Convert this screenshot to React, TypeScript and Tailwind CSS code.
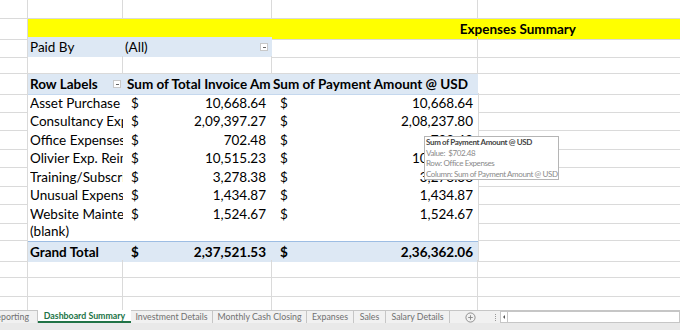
import React from 'react';

const rows = [
  { label: "Asset Purchase", inv: "10,668.64", pay: "10,668.64" },
  { label: "Consultancy Expenses", inv: "2,09,397.27", pay: "2,08,237.80" },
  { label: "Office Expenses", inv: "702.48", pay: "702.48" },
  { label: "Olivier Exp. Reimbursement", inv: "10,515.23", pay: "10,515.23" },
  { label: "Training/Subscription", inv: "3,278.38", pay: "3,278.38" },
  { label: "Unusual Expenses", inv: "1,434.87", pay: "1,434.87" },
  { label: "Website Maintenance", inv: "1,524.67", pay: "1,524.67" },
  { label: "(blank)", inv: "", pay: "" },
];

const tabs = [
  { name: "Investment Details", w: "w-[82px]" },
  { name: "Monthly Cash Closing", w: "w-[94px]" },
  { name: "Expanses", w: "w-[47px]" },
  { name: "Sales", w: "w-[32px]" },
  { name: "Salary Details", w: "w-[64px]" },
];

function Dropdown() {
  return (
    <span className="w-[8px] h-[8px] border border-[#c8c8c8] bg-white flex items-end justify-center">
      <span className="w-[3px] h-[1px] bg-[#666] mb-[2px]"></span>
    </span>
  );
}

// plain grid row: A | B | C | D | E
function EmptyRow() {
  return (
    <div className="grid grid-cols-[28px_95px_149px_206px_1fr] h-[18.5px] shrink-0">
      <div className="border-r border-b border-[#dadada]"></div>
      <div className="border-r border-b border-[#dadada]"></div>
      <div className="border-r border-b border-[#dadada]"></div>
      <div className="border-r border-b border-[#dadada]"></div>
      <div className="border-b border-[#dadada]"></div>
    </div>
  );
}

export default function App() {
  return (
    <div className="w-[680px] h-[330px] bg-white overflow-hidden font-['Lato',sans-serif] text-[13.5px] text-black relative">
      <div className="h-[310px] flex flex-col overflow-hidden">
        <EmptyRow />

        {/* title */}
        <div className="grid grid-cols-[28px_1fr] h-[18.5px] shrink-0">
          <div className="border-r border-b border-[#dadada]"></div>
          <div className="bg-[#ffff00] border-b border-[#dadada] flex items-center justify-end pr-[104px] font-bold">
            Expenses Summary
          </div>
        </div>

        {/* filter */}
        <div className="grid grid-cols-[28px_95px_149px_206px_1fr] h-[18.5px] shrink-0">
          <div className="border-r border-b border-[#dadada]"></div>
          <div className="bg-[#dde8f4] border-b border-white flex items-center pl-[2px]">Paid By</div>
          <div className="bg-[#dde8f4] border-b border-white flex items-center justify-between pl-[2px] pr-[4px]">
            <span>(All)</span>
            <Dropdown />
          </div>
          <div className="border-r border-b border-[#dadada]"></div>
          <div className="border-b border-[#dadada]"></div>
        </div>

        <EmptyRow />

        {/* header */}
        <div className="grid grid-cols-[28px_95px_149px_206px_1fr] h-[18.5px] shrink-0">
          <div className="border-r border-b border-[#dadada]"></div>
          <div className="bg-[#dde8f4] border-b border-[#c5d8ee] flex items-center justify-between pl-[2px] pr-[2px] font-bold">
            <span>Row Labels</span>
            <Dropdown />
          </div>
          <div className="bg-[#dde8f4] border-b border-[#c5d8ee] flex items-center pl-[4px] font-bold whitespace-nowrap overflow-hidden">
            Sum of Total Invoice Am
          </div>
          <div className="bg-[#dde8f4] border-b border-[#c5d8ee] flex items-center pl-[1px] font-bold whitespace-nowrap overflow-hidden">
            Sum of Payment Amount @ USD
          </div>
          <div className="border-b border-[#dadada]"></div>
        </div>

        {rows.map((r, i) => (
          <div key={i} className="grid grid-cols-[28px_95px_149px_206px_1fr] h-[18.5px] shrink-0">
            <div className="border-r border-b border-[#dadada]"></div>
            <div className="pl-[2px] overflow-hidden">
              <div className="h-full flex items-center whitespace-nowrap overflow-hidden">{r.label}</div>
            </div>
            <div className="flex items-center justify-between pl-[8px] pr-[6px]">
              <span>{r.inv ? "$" : ""}</span>
              <span>{r.inv}</span>
            </div>
            <div className="flex items-center justify-between pl-[8px] pr-[5px]">
              <span>{r.pay ? "$" : ""}</span>
              <span>{r.pay}</span>
            </div>
            <div className="border-l border-b border-[#dadada]"></div>
          </div>
        ))}

        {/* grand total */}
        <div className="grid grid-cols-[28px_95px_149px_206px_1fr] h-[19px] shrink-0">
          <div className="border-r border-b border-[#dadada]"></div>
          <div className="bg-[#dde8f4] border-t border-[#9dbde3] flex items-center pl-[2px] font-bold">Grand Total</div>
          <div className="bg-[#dde8f4] border-t border-[#9dbde3] flex items-center justify-between pl-[8px] pr-[6px] font-bold">
            <span>$</span>
            <span>2,37,521.53</span>
          </div>
          <div className="bg-[#dde8f4] border-t border-[#9dbde3] flex items-center justify-between pl-[8px] pr-[5px] font-bold">
            <span>$</span>
            <span>2,36,362.06</span>
          </div>
          <div className="border-l border-b border-[#dadada]"></div>
        </div>

        <EmptyRow />
        <EmptyRow />
        <EmptyRow />
      </div>

      {/* tooltip */}
      <div className="absolute left-[424px] top-[136px] w-[135px] h-[44px] bg-white border border-[#b5b5b5] pl-[1px] text-[8px] tracking-[-0.4px] leading-[10.5px] text-[#8a8a8a] whitespace-nowrap overflow-hidden">
        <div className="font-bold text-[#444] tracking-[-0.35px]">Sum of Payment Amount @ USD</div>
        <div>Value:&nbsp; $702.48</div>
        <div>Row: Office Expenses</div>
        <div>Column: Sum of Payment Amount @ USD</div>
      </div>

      {/* sheet tabs */}
      <div className="h-[13px] bg-[#f1f1f1] border-t border-[#c6c6c6] flex items-stretch text-[8.8px] text-[#707070]">
        <div className="w-[38px] flex items-center justify-end pr-[8px] border-r border-[#c6c6c6] overflow-hidden whitespace-nowrap">eporting</div>
        <div className="w-[93px] bg-white border-b-2 border-[#217346] -mt-[1px] flex items-center justify-center font-bold text-[#217346] whitespace-nowrap">
          Dashboard Summary
        </div>
        {tabs.map((t) => (
          <div key={t.name} className={`${t.w} flex items-center justify-center border-r border-[#c6c6c6] whitespace-nowrap`}>{t.name}</div>
        ))}
        <div className="w-[40px] flex items-center justify-center">
          <svg width="11" height="11" viewBox="0 0 12 12">
            <circle cx="6" cy="6" r="5" fill="none" stroke="#888" strokeWidth="1" />
            <path d="M6 3.5v5M3.5 6h5" stroke="#888" strokeWidth="1" />
          </svg>
        </div>
        <div className="w-[10px] flex items-center justify-center">
          <span className="w-[1px] h-[7px] border-l border-dotted border-[#999]"></span>
        </div>
        <div className="w-[8px] bg-white border border-[#c6c6c6] flex items-center justify-center">
          <span className="w-0 h-0 border-y-[2px] border-y-transparent border-r-[2px] border-r-[#555]"></span>
        </div>
        <div className="flex-1 bg-white border border-l-0 border-[#c6c6c6]"></div>
      </div>
      <div className="h-[8px] bg-[#e9e9e9]"></div>
    </div>
  );
}
